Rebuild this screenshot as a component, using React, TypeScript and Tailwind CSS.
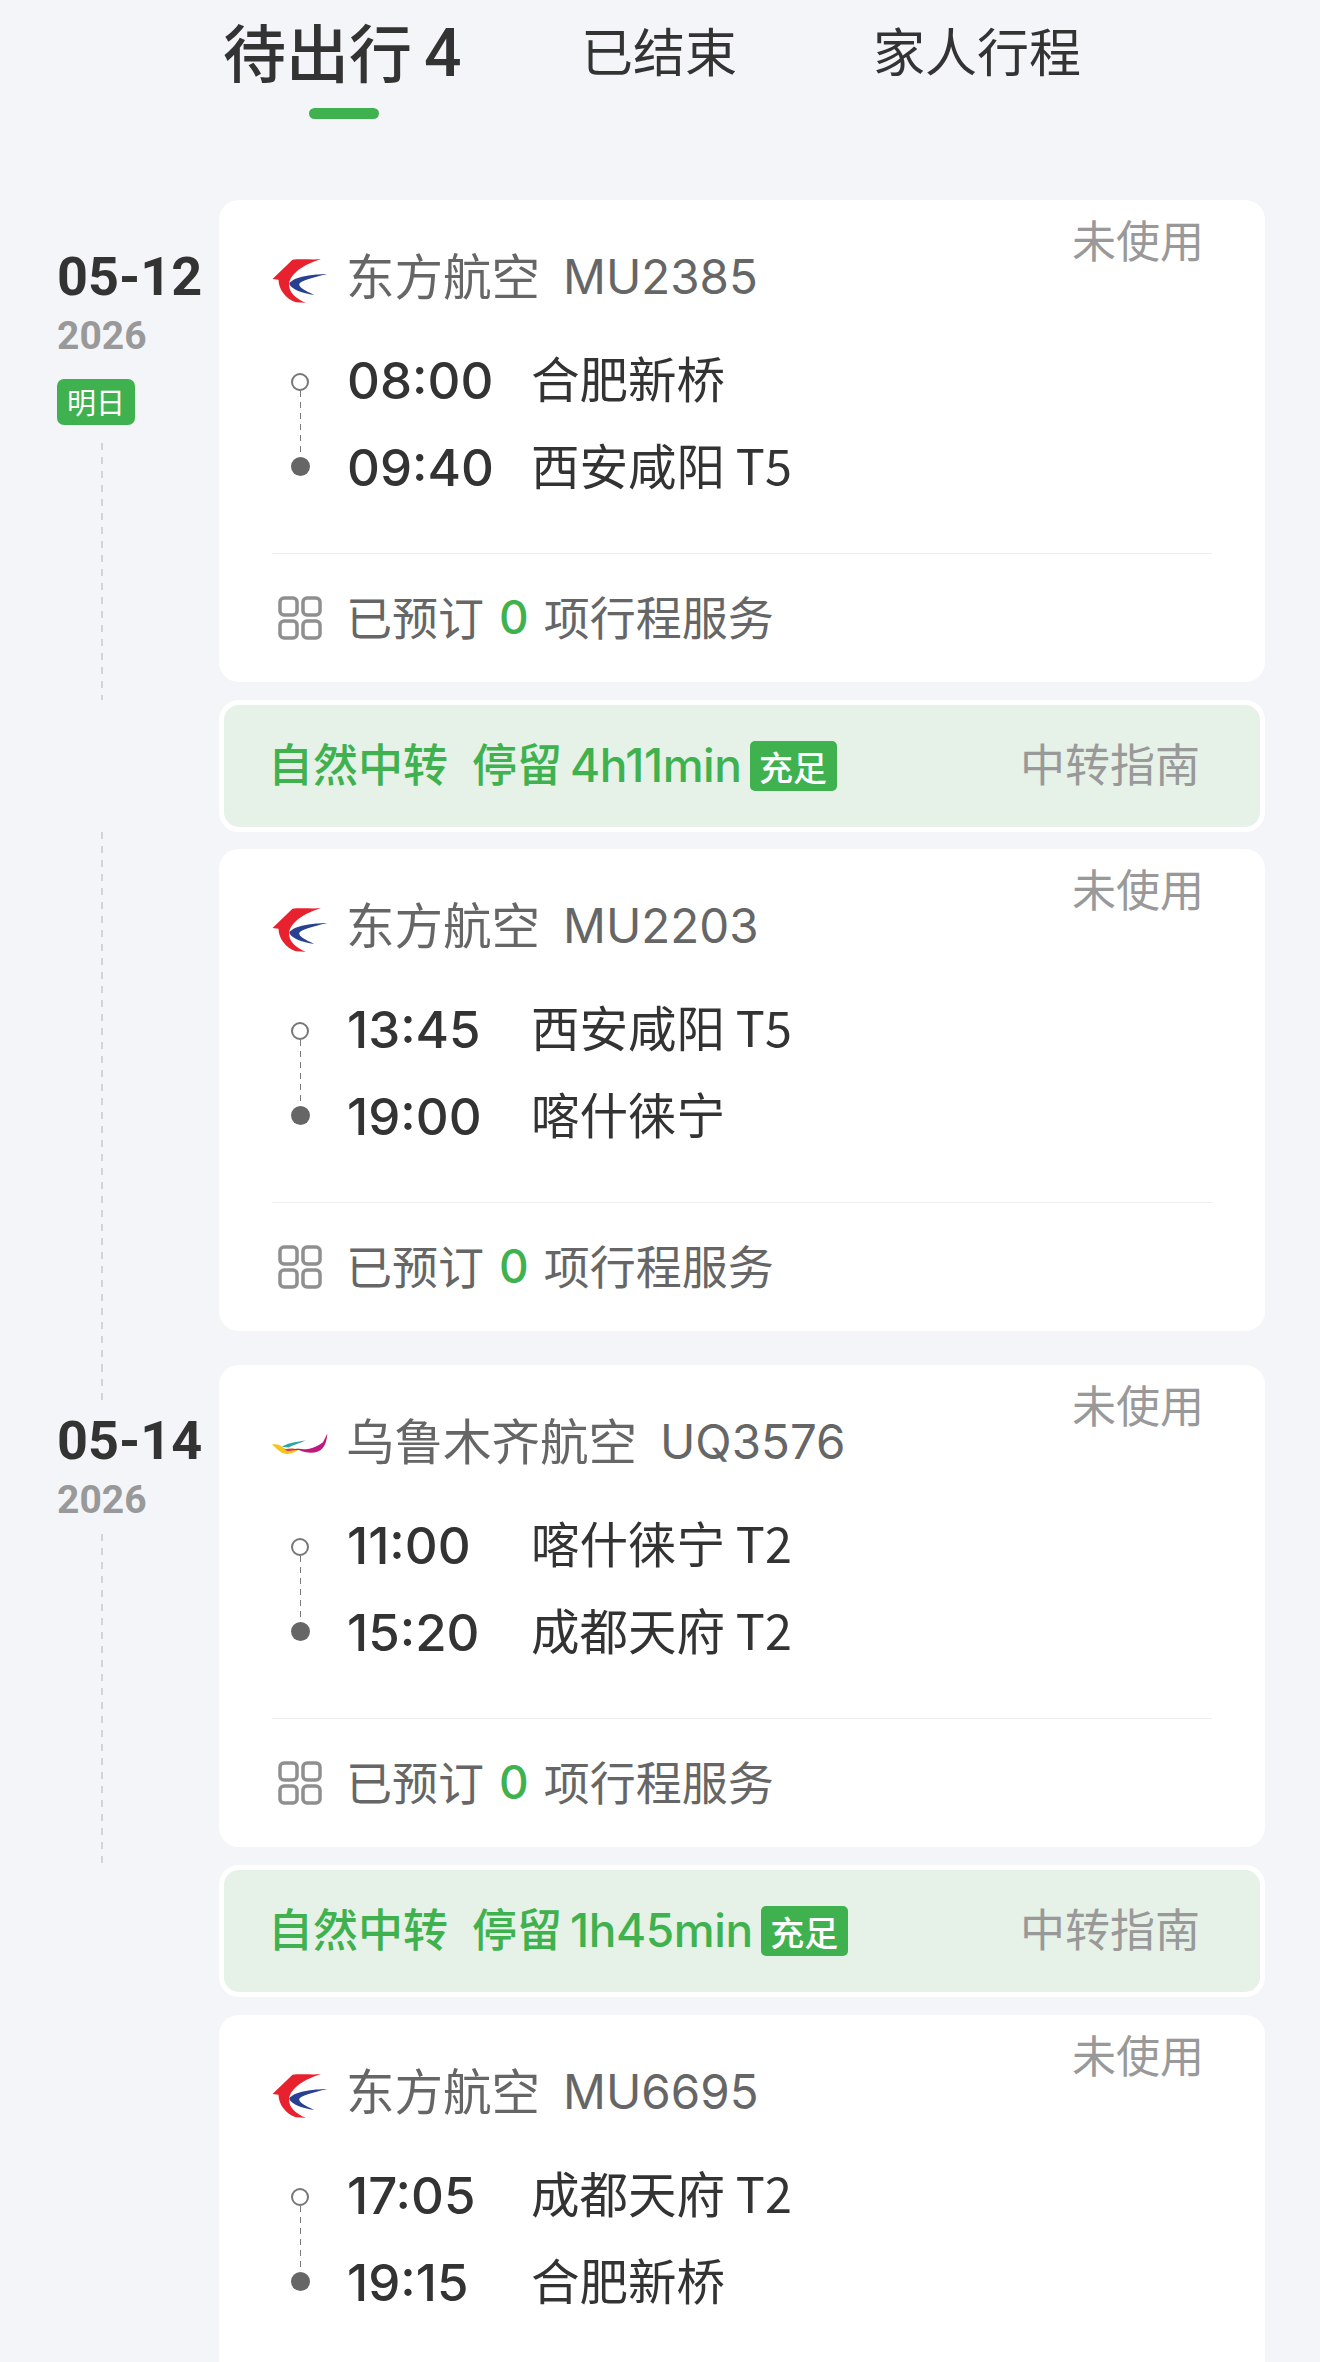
const cjk = "font-['Noto_Sans_CJK_SC','Inter',sans-serif]"

type Leg = {
  airline: string
  flight: string
  logo: 'mu' | 'uq'
  dep: string
  depPort: string
  arr: string
  arrPort: string
}

function MuLogo() {
  return (
    <svg viewBox="70 60 165 132" className="mt-[8px] h-[44px] w-[56px] shrink-0">
      <path
        d="M215 61C185 62 150 60 130 62L70 120L88 122C88 150 110 180 140 190L170 191C140 180 118 160 120 135C122 105 165 75 215 61Z"
        fill="#e8212e"
      />
      <path
        d="M234 105C190 106 135 112 120 134C128 152 160 162 195 168C168 155 150 146 150 136C152 126 190 116 234 105Z"
        fill="#27408f"
      />
    </svg>
  )
}

function UqLogo() {
  return (
    <svg viewBox="68 35 167 65" className="mt-[4px] h-[22px] w-[56px] shrink-0">
      <path d="M68 69C85 66 95 72 105 80C120 88 135 82 150 82C140 92 120 100 105 96C90 92 82 80 68 69Z" fill="#f5c518" />
      <path d="M98 76C110 66 135 62 168 57C150 66 130 70 118 78Z" fill="#2aa7a8" />
      <path d="M105 84C120 88 128 80 150 82C165 86 195 82 220 62L233 36C231 60 226 80 205 90C185 97 165 92 150 86C135 84 120 92 105 84Z" fill="#c2187e" />
      <path d="M106 84C115 82 125 80 135 82C125 88 115 90 106 84Z" fill="#d9442c" />
    </svg>
  )
}

function GridIcon() {
  return (
    <svg viewBox="0 0 44 44" className="h-[44px] w-[44px]" fill="none" stroke="#8f8f8f" strokeWidth="3.5">
      <rect x="2" y="2" width="17" height="17" rx="4" />
      <rect x="25" y="2" width="17" height="17" rx="4" />
      <rect x="2" y="25" width="17" height="17" rx="4" />
      <rect x="25" y="25" width="17" height="17" rx="4" />
    </svg>
  )
}

function DashLine({ className }: { className?: string }) {
  return (
    <div
      className={`w-[2px] bg-[repeating-linear-gradient(to_bottom,#d2d4d8_0,#d2d4d8_7px,transparent_7px,transparent_14px)] ${className ?? ''}`}
    />
  )
}

function DateBlock({ day, badge }: { day: string; badge?: string }) {
  return (
    <div className="flex flex-col items-start">
      <div className="h-[60px] font-['Roboto'] text-[54px] leading-[60px] font-bold text-[#333]">{day}</div>
      <div className="mt-[4px] h-[50px] font-['Roboto'] text-[39px] leading-[50px] font-bold text-[#999]">2026</div>
      {badge && (
        <div className={`mt-[18px] flex h-[46px] w-[78px] items-center justify-center rounded-[7px] bg-[#3fb24f] text-[29px] text-white ${cjk}`}>
          {badge}
        </div>
      )}
    </div>
  )
}

// the last card runs off the bottom of the page before its footer starts
function FlightCard({ leg, footer = true }: { leg: Leg; footer?: boolean }) {
  return (
    <div className={`relative h-[482px] w-[1046px] rounded-[20px] bg-white px-[53px] pt-[47px] ${cjk}`}>
      <div className="absolute top-[9px] right-[61px] text-[44px] leading-[60px] text-[#999]">未使用</div>

      <div className="flex h-[60px] items-center text-[48.5px] text-[#666]">
        {leg.logo === 'mu' ? <MuLogo /> : <UqLogo />}
        <span className="ml-[18px] pb-[6px]">{leg.airline}</span>
        <span className="ml-[23px] font-['Inter'] text-[47.5px]">{leg.flight}</span>
      </div>

      <div className="mt-[44px] flex">
        <div className="flex w-[56px] flex-col items-center py-[22px]">
          <div className="h-[18px] w-[18px] rounded-full border-2 border-[#777]" />
          <div className="w-px flex-1 bg-[repeating-linear-gradient(to_bottom,#777_0,#777_6px,transparent_6px,transparent_11px)]" />
          <div className="h-[19px] w-[19px] rounded-full bg-[#666]" />
        </div>
        <div className="ml-[19px] flex flex-col gap-[27px] text-[#333]">
          <div className="flex h-[60px] items-center">
            <span className="w-[184px] font-['Inter'] text-[51px] font-medium">{leg.dep}</span>
            <span className="pb-[7px] text-[48.5px]">{leg.depPort}</span>
          </div>
          <div className="flex h-[60px] items-center">
            <span className="w-[184px] font-['Inter'] text-[51px] font-medium">{leg.arr}</span>
            <span className="pb-[7px] text-[48.5px]">{leg.arrPort}</span>
          </div>
        </div>
      </div>

      {footer && (
        <>
          <div className="mt-[55px] h-px bg-[#eeeeee]" />

          <div className="mt-[34px] flex h-[60px] items-center pb-[5px] text-[46px] text-[#666]">
            <div className="ml-[6px] flex w-[68px] pt-[5px]">
              <GridIcon />
            </div>
            <span>已预订</span>
            <span className="mx-[15px] pt-[4px] font-['Inter'] font-medium text-[#3fb24f]">0</span>
            <span>项行程服务</span>
          </div>
        </>
      )}
    </div>
  )
}

function TransferBar({ stay }: { stay: string }) {
  return (
    <div className={`flex h-[132px] w-[1046px] items-center justify-between rounded-[20px] border-[5px] border-white bg-[#e6f1e8] pr-[60px] pl-[44px] ${cjk}`}>
      <div className="flex items-center text-[45px] font-medium text-[#3fb24f]">
        <span className="pb-[6px]">自然中转</span>
        <span className="ml-[24px] pb-[6px]">停留</span>
        <span className="ml-[8px] pb-[2px] font-['Inter'] text-[46px] font-medium tracking-[-0.4px]">{stay}</span>
        <span className="ml-[8px] flex h-[50px] w-[87px] items-center justify-center rounded-[5px] bg-[#3fb24f] text-[34px] font-medium text-white">
          充足
        </span>
      </div>
      <div className="pb-[6px] text-[45px] text-[#999]">中转指南</div>
    </div>
  )
}

export default function App() {
  return (
    <div className="h-[2362px] w-[1320px] overflow-hidden bg-[#f3f5f9]">
      {/* Tabs */}
      <div className={`flex h-[200px] pl-[223px] text-[#333] ${cjk}`}>
        <div className="relative flex h-[100px] w-[358px] items-center text-[63px] font-medium">
          待出行<span className="ml-[12px] pt-[6px] font-['Roboto'] text-[66px]">4</span>
          <div className="absolute top-[108px] left-[86px] h-[11px] w-[70px] rounded-full bg-[#3fb24f]" />
        </div>
        <div className="flex h-[100px] w-[292px] items-center text-[52px]">已结束</div>
        <div className="flex h-[100px] items-center text-[52px]">家人行程</div>
      </div>

      {/* MU2385 */}
      <div className="flex">
        <div className="flex w-[219px] flex-col pt-[47px] pl-[57px]">
          <DateBlock day="05-12" badge="明日" />
          <DashLine className="mt-[18px] ml-[44px] flex-1" />
        </div>
        <div className="pb-[18px]">
          <FlightCard
            leg={{ airline: '东方航空', flight: 'MU2385', logo: 'mu', dep: '08:00', depPort: '合肥新桥', arr: '09:40', arrPort: '西安咸阳 T5' }}
          />
        </div>
      </div>

      <div className="flex">
        <div className="w-[219px]" />
        <TransferBar stay="4h11min" />
      </div>

      {/* MU2203 */}
      <div className="flex">
        <div className="flex w-[219px] flex-col pl-[57px]">
          <DashLine className="ml-[44px] flex-1" />
        </div>
        <div className="pt-[17px] pb-[34px]">
          <FlightCard
            leg={{ airline: '东方航空', flight: 'MU2203', logo: 'mu', dep: '13:45', depPort: '西安咸阳 T5', arr: '19:00', arrPort: '喀什徕宁' }}
          />
        </div>
      </div>

      {/* UQ3576 */}
      <div className="flex">
        <div className="flex w-[219px] flex-col pl-[57px]">
          <DashLine className="ml-[44px] h-[40px]" />
          <div className="mt-[6px]">
            <DateBlock day="05-14" />
          </div>
          <DashLine className="mt-[9px] ml-[44px] flex-1" />
        </div>
        <div className="pb-[18px]">
          <FlightCard
            leg={{ airline: '乌鲁木齐航空', flight: 'UQ3576', logo: 'uq', dep: '11:00', depPort: '喀什徕宁 T2', arr: '15:20', arrPort: '成都天府 T2' }}
          />
        </div>
      </div>

      <div className="flex">
        <div className="w-[219px]" />
        <TransferBar stay="1h45min" />
      </div>

      {/* MU6695 */}
      <div className="flex pt-[18px]">
        <div className="w-[219px]" />
        <FlightCard
          footer={false}
          leg={{ airline: '东方航空', flight: 'MU6695', logo: 'mu', dep: '17:05', depPort: '成都天府 T2', arr: '19:15', arrPort: '合肥新桥' }}
        />
      </div>
    </div>
  )
}
